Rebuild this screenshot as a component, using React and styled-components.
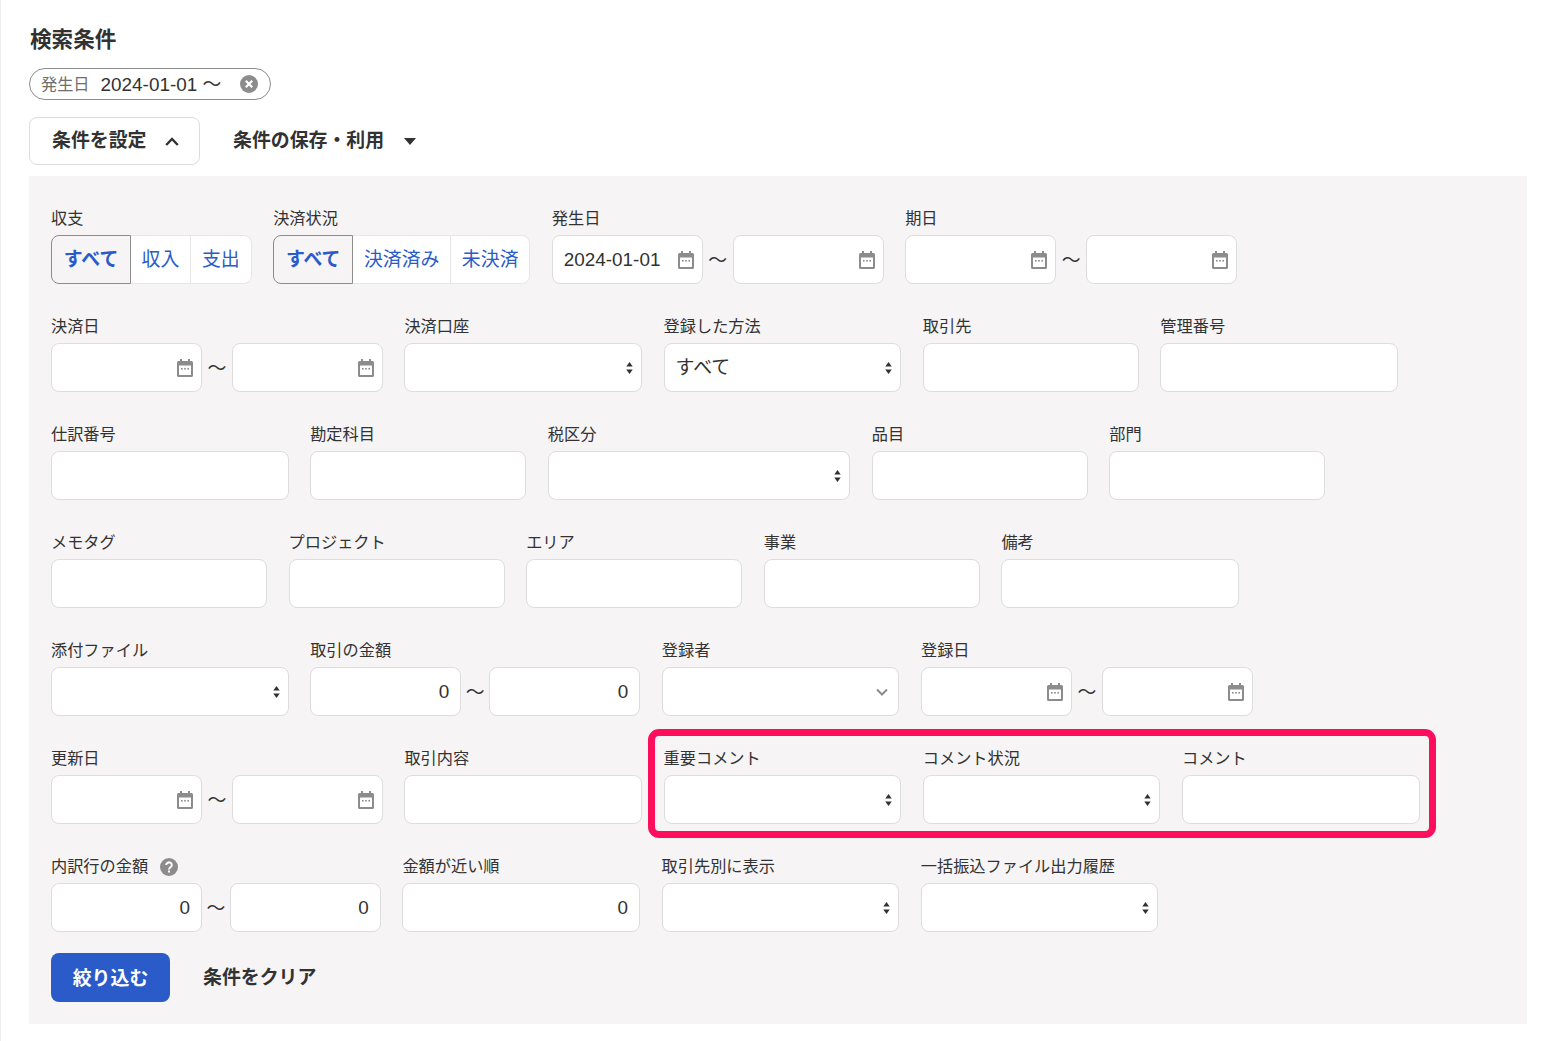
import styled, { createGlobalStyle } from 'styled-components';

const GlobalStyle = createGlobalStyle`
    html, body {
        margin: 0;
        background: #fff;
    }

    body {
        font-family: "Liberation Sans", "Noto Sans CJK JP", sans-serif;
        font-size: 16.2px;
        color: #323232;
    }

    input, button {
        font-family: inherit;
    }
`;

const Page = styled.div`
    box-sizing: border-box;
    width: 1559px;
    height: 1041px;
    padding: 26px 32px 0 28px;
    border-left: 1px solid #eee;
`;

const Title = styled.h2`
    margin: 0;
    padding-left: 1px;
    font-size: 21.6px;
    line-height: 28px;
    font-weight: 700;
`;

const Chip = styled.div`
    box-sizing: border-box;
    display: inline-flex;
    align-items: center;
    width: 242px;
    height: 32px;
    margin-top: 14px;
    padding: 0 12px 3px 11px;
    border: 1px solid #8c8c8c;
    border-radius: 16px;
    font-size: 18.9px;
    vertical-align: top;

    small {
        margin-right: 11px;
        font-size: 16.2px;
        color: #6e6e6e;
    }

    svg {
        margin: 3px 0 0 auto;
    }
`;

const Toolbar = styled.div`
    display: flex;
    align-items: center;
    margin-top: 17px;
`;

const ToggleButton = styled.button`
    display: flex;
    align-items: center;
    justify-content: space-between;
    box-sizing: border-box;
    width: 171px;
    height: 48px;
    padding: 0 20px 5px 22px;
    background: #fff;
    border: 1px solid #ddd;
    border-radius: 8px;
    font-size: 18.9px;
    font-weight: 700;
    color: #323232;

    svg {
        margin-top: 5px;
    }
`;

const MenuButton = styled.button`
    display: flex;
    align-items: center;
    gap: 20px;
    height: 48px;
    margin-left: 33px;
    padding: 0 0 5px;
    background: none;
    border: 0;
    font-size: 18.9px;
    font-weight: 700;
    color: #323232;

    svg {
        margin-top: 5px;
    }
`;

const Panel = styled.div`
    box-sizing: border-box;
    height: 848px;
    margin-top: 11px;
    padding: 30px 22px 22px;
    background: #f6f4f5;
`;

const Row = styled.div`
    display: flex;
    gap: 21.6px;
    margin-bottom: ${(p) => p.$mb ?? 30}px;
`;

const Field = styled.div`
    flex: none;
    width: ${(p) => p.$w}px;
`;

const Label = styled.div`
    display: flex;
    align-items: center;
    gap: 12px;
    box-sizing: border-box;
    height: 24px;
    margin-bottom: 5px;
    padding-top: 1px;
    font-size: 16.2px;
    line-height: 23px;
    color: #323232;
`;

const Box = styled.div`
    display: flex;
    align-items: center;
    box-sizing: border-box;
    flex: 1 1 0;
    min-width: 0;
    height: 49px;
    padding: 0 8px 0 11px;
    background: #fff;
    border: 1px solid #ddd;
    border-radius: 8px;
    font-size: 18.9px;
    color: #323232;
    justify-content: space-between;
`;

const AmountBox = styled(Box)`
    justify-content: flex-end;
    padding: 0 11px;
`;

const Value = styled.span`
    position: relative;
    top: ${(p) => (p.$kana ? -2 : 0)}px;
`;

const RangeRow = styled.div`
    display: flex;
    align-items: center;
`;

const Tilde = styled.span`
    flex: none;
    width: ${(p) => p.$w}px;
    padding-bottom: 2px;
    text-align: center;
    font-size: 18.9px;
`;

const Segments = styled.div`
    display: flex;
    height: 49px;
    background: #fff;
    border-radius: 8px;
`;

const Segment = styled.button`
    box-sizing: border-box;
    width: ${(p) => p.$w}px;
    height: 49px;
    padding: 0 0 5px;
    font-size: 18.9px;
    color: #2b5bc9;
    font-weight: ${(p) => (p.$active ? 700 : 400)};
    background: ${(p) => (p.$active ? '#f6f4f5' : '#fff')};
    border: 1px solid ${(p) => (p.$active ? '#8c8c8c' : '#e6e6e6')};
    border-left-width: ${(p) => (p.$active ? 1 : 0)}px;
    border-radius: ${(p) => (p.$active ? '8px 0 0 8px' : p.$last ? '0 8px 8px 0' : '0')};
`;

const Highlight = styled.div`
    position: relative;
    display: flex;
    gap: 21.6px;

    &::after {
        content: '';
        position: absolute;
        inset: -17px -16px -14px -16px;
        border: 7px solid #fd0f5e;
        border-radius: 11px;
        pointer-events: none;
    }
`;

const Actions = styled.div`
    display: flex;
    align-items: center;
    gap: 33px;
`;

const Primary = styled.button`
    width: 119px;
    height: 49px;
    padding: 0 0 3px;
    background: #2b5bc9;
    border: 0;
    border-radius: 8px;
    font-size: 18.9px;
    font-weight: 700;
    color: #fff;
`;

const Clear = styled.button`
    padding: 0 0 5px;
    background: none;
    border: 0;
    font-size: 18.9px;
    font-weight: 700;
    color: #323232;
`;

const CalendarIcon = () => (
    <svg width="16" height="18" viewBox="0 0 16 18" fill="#8c8c8c">
        <path fillRule="evenodd" d="M3 0h2v2h6V0h2v2h1.500A1.500 1.500 0 0 1 16 3.500v13a1.500 1.500 0 0 1-1.500 1.500h-13A1.500 1.500 0 0 1 0 16.500v-13A1.500 1.500 0 0 1 1.500 2H3zM2 6.500V16h12V6.500z" />
        <rect x="4" y="9" width="1.600" height="1.600" />
        <rect x="7.200" y="9" width="1.600" height="1.600" />
        <rect x="10.400" y="9" width="1.600" height="1.600" />
    </svg>
);

const SortIcon = () => (
    <svg width="7" height="12" viewBox="0 0 7 13" fill="#323232">
        <path d="M3.500 0L7 5H0zM0 8h7l-3.500 5z" />
    </svg>
);

const ChevronIcon = styled.svg`
    margin-right: 2px;
`;

const ChevronDown = () => (
    <ChevronIcon width="12" height="8" viewBox="0 0 12 8" fill="none" stroke="#8c8c8c" strokeWidth="2">
        <path d="M1 1.500l5 5 5-5" />
    </ChevronIcon>
);

const ChevronUp = () => (
    <svg width="14" height="9" viewBox="0 0 14 9" fill="none" stroke="#323232" strokeWidth="2.400">
        <path d="M1.200 8l5.800-6 5.800 6" />
    </svg>
);

const Caret = () => (
    <svg width="12" height="7" viewBox="0 0 12 7" fill="#323232">
        <path d="M0 0h12L6 7z" />
    </svg>
);

const ClearIcon = () => (
    <svg width="18" height="18" viewBox="0 0 18 18">
        <circle cx="9" cy="9" r="9" fill="#8c8c8c" />
        <path d="M5.800 5.800l6.400 6.400M12.200 5.800l-6.400 6.400" stroke="#fff" strokeWidth="2.200" />
    </svg>
);

const HelpIcon = () => (
    <svg width="18" height="18" viewBox="0 0 18 18">
        <circle cx="9" cy="9" r="9" fill="#8c8c8c" />
        <path d="M6.200 7a2.800 2.600 0 1 1 4.300 2.200c-1 .7-1.500 1.100-1.500 2.300" fill="none" stroke="#fff" strokeWidth="2" />
        <rect x="8" y="12.500" width="2" height="2" fill="#fff" />
    </svg>
);

const Text = ({ label, w }) => (
    <Field $w={w}>
        <Label>{label}</Label>
        <RangeRow><Box /></RangeRow>
    </Field>
);

const Amount = ({ label, w }) => (
    <Field $w={w}>
        <Label>{label}</Label>
        <RangeRow><AmountBox>0</AmountBox></RangeRow>
    </Field>
);

const Select = ({ label, w, value, icon }) => (
    <Field $w={w}>
        <Label>{label}</Label>
        <RangeRow>
            <Box>
                <Value $kana>{value}</Value>
                {icon || <SortIcon />}
            </Box>
        </RangeRow>
    </Field>
);

const DateRange = ({ label, from }) => (
    <Field $w={331.8}>
        <Label>{label}</Label>
        <RangeRow>
            <Box><Value>{from}</Value><CalendarIcon /></Box>
            <Tilde $w={30}>〜</Tilde>
            <Box><Value /><CalendarIcon /></Box>
        </RangeRow>
    </Field>
);

const AmountRange = ({ label, help, w = 330 }) => (
    <Field $w={w}>
        <Label>{label}{help && <HelpIcon />}</Label>
        <RangeRow>
            <AmountBox>0</AmountBox>
            <Tilde $w={28}>〜</Tilde>
            <AmountBox>0</AmountBox>
        </RangeRow>
    </Field>
);

const SegmentField = ({ label, items }) => (
    <Field $w={items.reduce((sum, i) => sum + i.w, 0)}>
        <Label>{label}</Label>
        <Segments>
            {items.map((item, idx) => (
                <Segment key={item.text} $w={item.w} $active={idx === 0} $last={idx === items.length - 1}>
                    {item.text}
                </Segment>
            ))}
        </Segments>
    </Field>
);

export default function App() {
    return (
        <Page>
            <GlobalStyle />
            <Title>検索条件</Title>
            <Chip>
                <small>発生日</small>
                2024-01-01 〜
                <ClearIcon />
            </Chip>
            <Toolbar>
                <ToggleButton>条件を設定<ChevronUp /></ToggleButton>
                <MenuButton>条件の保存・利用<Caret /></MenuButton>
            </Toolbar>
            <Panel>
                <Row>
                    <SegmentField label="収支" items={[{ text: 'すべて', w: 80 }, { text: '収入', w: 60 }, { text: '支出', w: 60.6 }]} />
                    <SegmentField label="決済状況" items={[{ text: 'すべて', w: 80 }, { text: '決済済み', w: 98 }, { text: '未決済', w: 79 }]} />
                    <DateRange label="発生日" from="2024-01-01" />
                    <DateRange label="期日" />
                </Row>
                <Row>
                    <DateRange label="決済日" />
                    <Select label="決済口座" w={237.6} />
                    <Select label="登録した方法" w={237.6} value="すべて" />
                    <Text label="取引先" w={216} />
                    <Text label="管理番号" w={237.6} />
                </Row>
                <Row>
                    <Text label="仕訳番号" w={237.6} />
                    <Text label="勘定科目" w={216} />
                    <Select label="税区分" w={302.4} />
                    <Text label="品目" w={216} />
                    <Text label="部門" w={216} />
                </Row>
                <Row>
                    <Text label="メモタグ" w={216} />
                    <Text label="プロジェクト" w={216} />
                    <Text label="エリア" w={216} />
                    <Text label="事業" w={216} />
                    <Text label="備考" w={237.6} />
                </Row>
                <Row>
                    <Select label="添付ファイル" w={237.6} />
                    <AmountRange label="取引の金額" />
                    <Select label="登録者" w={237.6} icon={<ChevronDown />} />
                    <DateRange label="登録日" />
                </Row>
                <Row>
                    <DateRange label="更新日" />
                    <Text label="取引内容" w={237.6} />
                    <Highlight>
                        <Select label="重要コメント" w={237.6} />
                        <Select label="コメント状況" w={237.6} />
                        <Text label="コメント" w={237.6} />
                    </Highlight>
                </Row>
                <Row $mb={21}>
                    <AmountRange label="内訳行の金額" help w={329.8} />
                    <Amount label="金額が近い順" w={237.6} />
                    <Select label="取引先別に表示" w={237.6} />
                    <Select label="一括振込ファイル出力履歴" w={237.6} />
                </Row>
                <Actions>
                    <Primary>絞り込む</Primary>
                    <Clear>条件をクリア</Clear>
                </Actions>
            </Panel>
        </Page>
    );
}
